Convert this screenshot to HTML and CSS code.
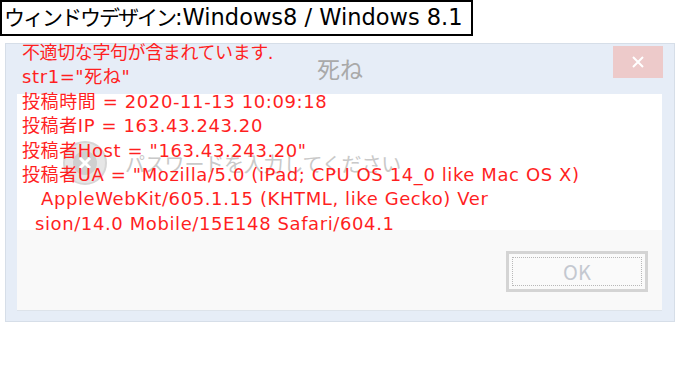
FILE: index.html
```html
<!DOCTYPE html>
<html lang="ja">

<head>
    <meta charset="UTF-8">
    <meta name="viewport" content="width=device-width, initial-scale=1.0">
    <title>ウィンドウデザイン</title>
    <link rel="stylesheet" href="styles.css">
</head>

<body>
    <div class="label"><span class="jp">ウィンドウデザイン</span>:Windows8 / Windows 8.1</div>

    <div class="stage">
        <div class="dialog">
            <div class="titlebar">
                <span class="title">死ね</span>
                <button class="close" type="button">
                    <svg width="14" height="14" viewBox="0 0 14 14">
                        <path d="M2 2 L12 12 M12 2 L2 12" stroke="#fff" stroke-width="2" fill="none" />
                    </svg>
                </button>
            </div>
            <div class="panel">
                <div class="body">
                    <div class="hint">
                        <svg width="46" height="46" viewBox="0 0 46 46">
                            <circle cx="23" cy="23" r="21" fill="#e6e6e6" stroke="#d6d6d6" stroke-width="2" />
                            <circle cx="23" cy="23" r="12" fill="#cfcfcf" />
                            <path d="M18 18 L28 28 M28 18 L18 28" stroke="#fff" stroke-width="3" fill="none" />
                        </svg>
                        <span>パスワードを入力してください</span>
                    </div>
                </div>
                <div class="footer">
                    <button class="ok" type="button"><span>OK</span></button>
                </div>
            </div>
        </div>

        <!-- red message drawn over the dialog -->
        <div class="message">
            <div class="head">不適切な字句が含まれています.</div>
            <div>str1="死ね"</div>
            <div>投稿時間 = 2020-11-13 10:09:18</div>
            <div>投稿者IP = 163.43.243.20</div>
            <div>投稿者Host = "163.43.243.20"</div>
            <div>投稿者UA = "Mozilla/5.0 (iPad; CPU OS 14_0 like Mac OS X)</div>
            <div class="wrap1">AppleWebKit/605.1.15 (KHTML, like Gecko) Ver</div>
            <div class="wrap2">sion/14.0 Mobile/15E148 Safari/604.1</div>
        </div>
    </div>
</body>

</html>
```

FILE: styles.css
```css
body {
    margin: 0;
    padding: 0;
    background-color: #fff;
    font-family: 'DejaVu Sans', 'Noto Sans CJK JP', sans-serif;
}

.label {
    display: inline-block;
    box-sizing: border-box;
    height: 36px;
    width: 473px;
    border: 2px solid #000;
    padding: 0 0 0 2px;
    font-size: 22.5px;
    line-height: 31px;
    color: #000;
    white-space: nowrap;
    vertical-align: top;
}

.label .jp {
    font-size: 21px;
    letter-spacing: -2px;
}

.stage {
    position: relative;
    padding: 7px 5px 0 5px;
}

.dialog {
    box-sizing: border-box;
    width: 670px;
    height: 279px;
    background-color: #e6edf7;
    border: 1px solid #d6dee8;
    display: flex;
    flex-direction: column;
}

.titlebar {
    height: 50px;
    display: flex;
    justify-content: center;
    align-items: flex-start;
    position: relative;
}

.title {
    font-family: 'Noto Sans CJK JP', sans-serif;
    font-size: 23px;
    color: #a9a9a9;
    margin-top: 7px;
    line-height: 34px;
}

.close {
    position: absolute;
    top: 2px;
    right: 11px;
    width: 50px;
    height: 32px;
    border: none;
    padding: 0;
    background-color: #edcaca;
    display: flex;
    align-items: center;
    justify-content: center;
}

.panel {
    margin: 0 12px 0 11px;
    height: 216px;
    display: flex;
    flex-direction: column;
    border-bottom: 1px solid #dde3ea;
}

.body {
    height: 136px;
    background-color: #fff;
    position: relative;
}

.hint {
    display: flex;
    align-items: center;
    gap: 17px;
    padding: 46px 0 0 45px;
}

.hint span {
    font-family: 'Noto Sans CJK JP', sans-serif;
    font-size: 20px;
    color: #c9c9c9;
    letter-spacing: -0.2px;
}

.footer {
    flex: 1;
    background-color: #f9f9f9;
    display: flex;
    justify-content: flex-end;
    align-items: flex-start;
    padding: 21px 14px 0 0;
}

.ok {
    box-sizing: border-box;
    width: 142px;
    height: 41px;
    border: 3px solid #d4d4d4;
    background-color: #fafafa;
    padding: 3px;
    font-family: 'Noto Sans CJK JP', sans-serif;
    font-size: 20px;
    color: #c4c8d0;
}

.ok span {
    display: flex;
    align-items: center;
    justify-content: center;
    height: 100%;
    border: 1px dotted #b8b8b8;
    box-sizing: border-box;
}

.message {
    position: absolute;
    top: 5px;
    left: 22px;
    font-family: 'DejaVu Sans', 'Noto Sans CJK JP', sans-serif;
    font-size: 18px;
    line-height: 24.4px;
    letter-spacing: 0.6px;
    color: #ff1f1f;
    white-space: nowrap;
}

.message .head {
    letter-spacing: -0.4px;
}

.message .wrap1 {
    padding-left: 19px;
}

.message .wrap2 {
    padding-left: 13px;
}
```
